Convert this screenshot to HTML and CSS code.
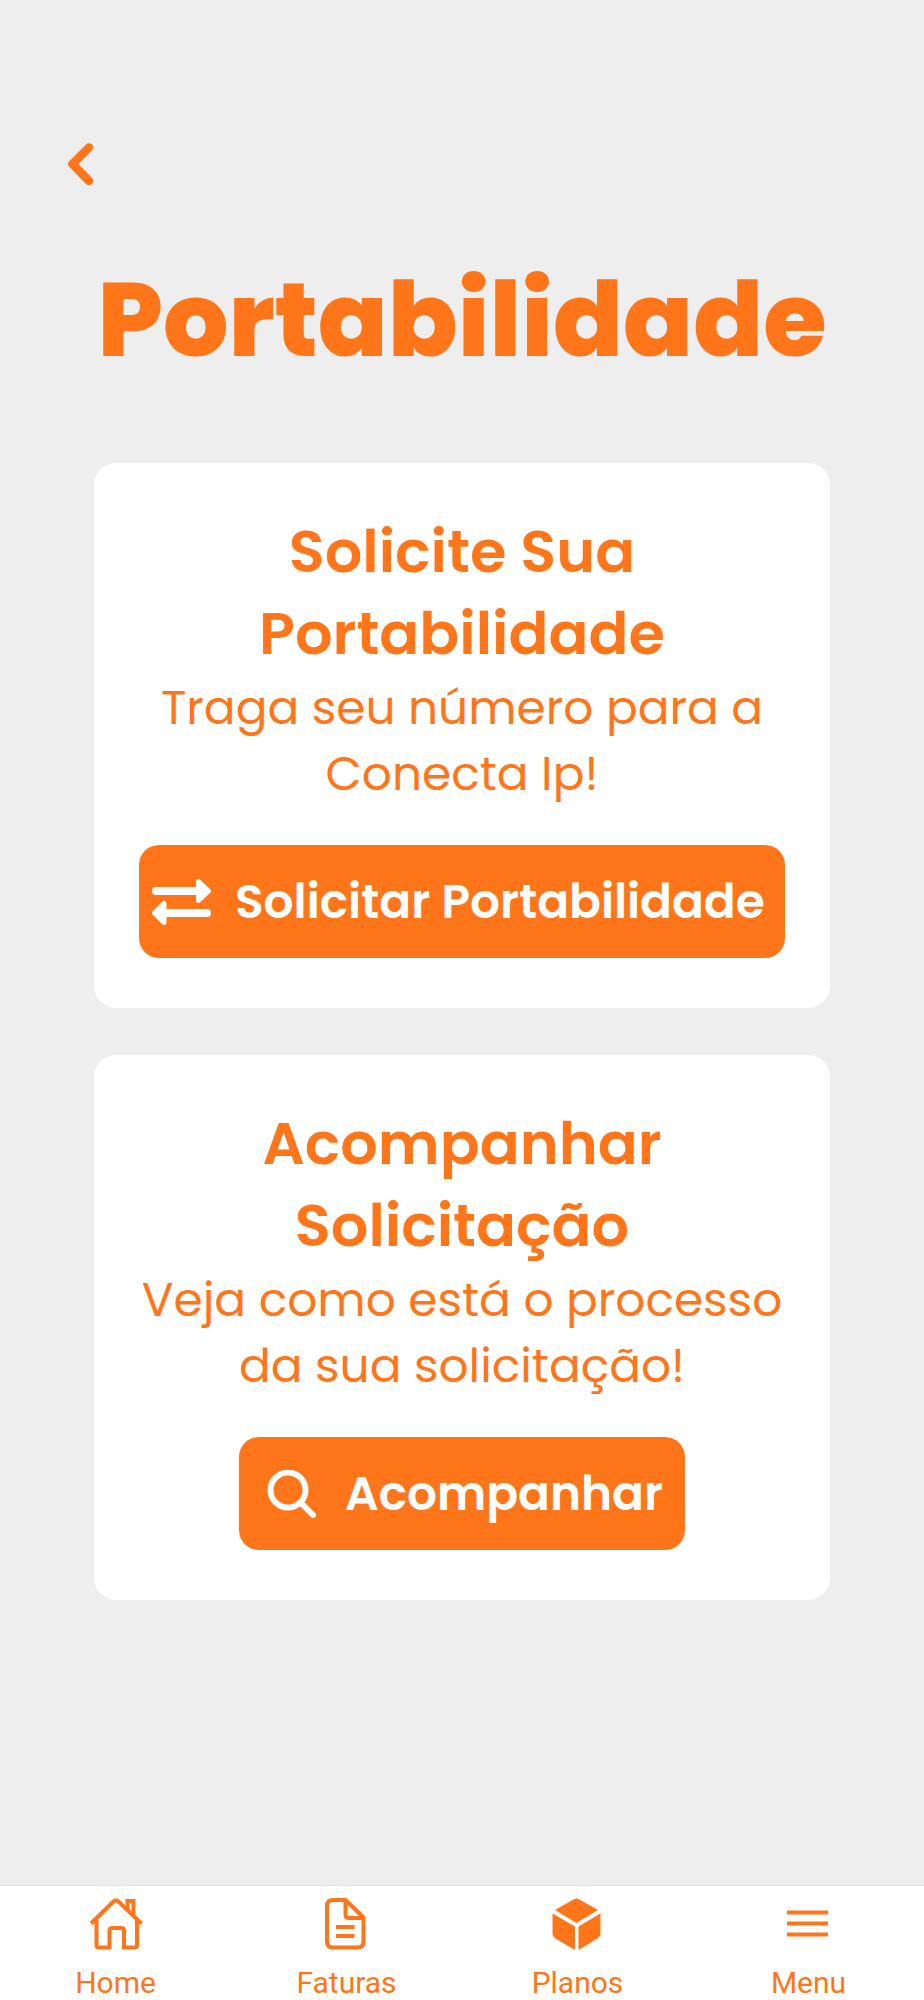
FILE: index.html
```
<!DOCTYPE html>
<html lang="pt-BR">
<head>
    <meta charset="UTF-8">
    <meta name="viewport" content="width=device-width, initial-scale=1.0">
    <title>Portabilidade</title>
    <link rel="stylesheet" href="styles.css">
</head>
<body>
    <header class="header">
        <button class="back" type="button" aria-label="Voltar">
            <svg width="26" height="42" viewBox="0 0 26 42">
                <path d="M21 4.5 4.5 21 21 38" fill="none" stroke="currentColor" stroke-width="8.5" stroke-linecap="round" stroke-linejoin="round"/>
            </svg>
        </button>
        <h1 class="title">Portabilidade</h1>
    </header>

    <main class="content">
        <section class="card">
            <h2 class="card-title">Solicite Sua Portabilidade</h2>
            <p class="card-text">Traga seu número para a Conecta Ip!</p>
            <button class="btn btn-wide" type="button">
                <svg width="60" height="48" viewBox="0 0 60 48" fill="currentColor" stroke="currentColor" stroke-linecap="round" stroke-linejoin="round">
                    <path d="M5 13H50M10 35H56" stroke-width="8"/>
                    <path d="M47.5 3.5V22.5L57.5 13ZM13 25.5V44.5L3.5 35Z" stroke-width="5"/>
                </svg>
                <span>Solicitar Portabilidade</span>
            </button>
        </section>

        <section class="card">
            <h2 class="card-title">Acompanhar Solicitação</h2>
            <p class="card-text">Veja como está o processo da sua solicitação!</p>
            <button class="btn" type="button">
                <svg width="60" height="48" viewBox="0 0 60 48" fill="none" stroke="currentColor" stroke-width="6" stroke-linecap="round">
                    <circle cx="27" cy="20" r="17.5"/>
                    <path d="M40 33 52 45"/>
                </svg>
                <span>Acompanhar</span>
            </button>
        </section>
    </main>

    <nav class="tabbar">
        <a class="tab" href="#home">
            <svg width="54" height="54" viewBox="0 0 54 54" fill="none" stroke="currentColor" stroke-width="4">
                <path d="M2 26.5 24.5 4.5Q27 2 29.5 4.5L52.5 26.5"/>
                <path d="M7.5 22.5V48Q7.5 50.5 10 50.5H20.5V34Q20.5 31 23.5 31H32Q35 31 35 34V50.5H45.5Q48 50.5 48 48V22.5"/>
                <path d="M38.5 12V4H44.5V17"/>
            </svg>
            <span>Home</span>
        </a>
        <a class="tab" href="#faturas">
            <svg width="54" height="54" viewBox="0 0 54 54" fill="none" stroke="currentColor" stroke-width="4" stroke-linejoin="round">
                <path d="M25.5 3H13Q7 3 7 9V44.5Q7 50.5 13 50.5H37.5Q43.5 50.5 43.5 44.5V20.5L25.5 3V17.5Q25.5 21 29 21H43.5"/>
                <path d="M16 30H34.5M16 39H34.5"/>
            </svg>
            <span>Faturas</span>
        </a>
        <a class="tab" href="#planos">
            <svg width="54" height="54" viewBox="0 0 54 54" fill="currentColor">
                <path d="M4 13 22.5 2.5Q25.5.5 28.5 2.5L47 13 25.5 26Z"/>
                <path d="M1.5 16.5 24 29.5V53L4.5 41.5Q1.5 39.5 1.5 36.5Z"/>
                <path d="M49.5 16.5 27.5 29.5V53L46.5 41.5Q49.5 39.5 49.5 36.5Z"/>
            </svg>
            <span>Planos</span>
        </a>
        <a class="tab" href="#menu">
            <svg width="54" height="54" viewBox="0 0 54 54" stroke="currentColor" stroke-width="4">
                <path d="M5 15.5H46M5 26.5H46M5 37.5H46"/>
            </svg>
            <span>Menu</span>
        </a>
    </nav>
</body>
</html>
```
FILE: styles.css
```
* {
    box-sizing: border-box;
}

body {
    margin: 0;
    min-height: 100vh;
    display: flex;
    flex-direction: column;
    background-color: #eeeeee;
    color: #ff761a;
    font-family: Poppins, Inter, sans-serif;
}

.header {
    padding: 143px 68px 0;
}

.back {
    display: block;
    padding: 0;
    border: none;
    background: none;
    color: inherit;
    cursor: pointer;
}

.back svg {
    display: block;
}

.title {
    margin: 60px 0 0;
    font-size: 103px;
    font-weight: 800;
    line-height: 150px;
    text-align: center;
}

.content {
    flex: 1;
    display: flex;
    flex-direction: column;
    gap: 47px;
    padding: 68px 94px;
}

.card {
    display: flex;
    flex-direction: column;
    align-items: center;
    padding: 48px 45px 50px;
    border-radius: 22px;
    background-color: #ffffff;
    text-align: center;
}

.card-title {
    margin: 0;
    font-size: 59px;
    font-weight: 600;
    line-height: 82px;
}

.card-text {
    margin: 0 0 38px;
    font-size: 47px;
    line-height: 66px;
}

.btn {
    display: flex;
    align-items: center;
    gap: 24px;
    height: 113px;
    padding: 0 22px;
    border: none;
    border-radius: 20px;
    background-color: #ff761a;
    color: #ffffff;
    font-family: inherit;
    font-size: 47px;
    font-weight: 600;
    white-space: nowrap;
    cursor: pointer;
}

.btn svg {
    flex-shrink: 0;
}

.btn-wide {
    width: 100%;
    padding: 0 12px;
}

.tabbar {
    display: flex;
    border-top: 1px solid #e2e2e2;
    background-color: #ffffff;
}

.tab {
    flex: 1;
    display: flex;
    flex-direction: column;
    align-items: center;
    gap: 14px;
    padding-top: 11px;
    color: inherit;
    font-family: Roboto, sans-serif;
    font-size: 30px;
    line-height: 35px;
    text-decoration: none;
}
```
